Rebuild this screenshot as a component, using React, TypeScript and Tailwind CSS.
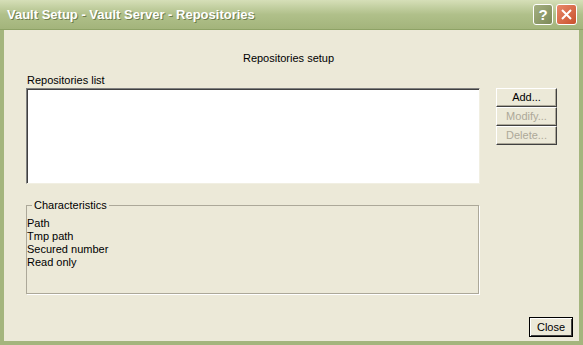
// Bouton classique XP (thème olive), relief 3D par bordures
function XpButton({
  label,
  disabled = false,
  className = "",
}: {
  label: string;
  disabled?: boolean;
  className?: string;
}) {
  return (
    <button
      disabled={disabled}
      className={
        "h-[19px] border border-t-white border-l-white border-r-[#404040] border-b-[#404040] bg-[#ece9d8] shadow-[inset_-1px_-1px_0_#aca899] text-[11px] leading-none " +
        (disabled ? "text-[#aca899] " : "text-black ") +
        className
      }
    >
      {label}
    </button>
  );
}

export default function App() {
  return (
    <div
      className="w-[583px] h-[345px] flex flex-col bg-[#ece9d8] overflow-hidden"
      style={{ fontFamily: '"Liberation Sans", Arial, sans-serif' }}
    >
      {/* Barre de titre */}
      <div className="h-[30px] shrink-0 flex items-center pl-[7px] pr-[6px] bg-gradient-to-b from-[#d6dfb8] via-[#b0c08a] to-[#a3b47b] border-b border-[#8ea266]">
        <span className="text-white font-bold text-[13px] [text-shadow:1px_1px_0_#6e7d4c]">
          Vault Setup - Vault Server - Repositories
        </span>
        <div className="ml-auto flex gap-[3px]">
          <div className="w-[20px] h-[21px] rounded-[3px] border border-white bg-gradient-to-br from-[#a5b082] to-[#7d8a58] flex items-center justify-center text-white font-bold text-[15px] leading-none">
            ?
          </div>
          <div className="w-[21px] h-[21px] rounded-[3px] border border-white bg-gradient-to-br from-[#e8886a] to-[#c9512b] flex items-center justify-center">
            <svg width="11" height="11" viewBox="0 0 11 11">
              <path d="M1 1 L10 10 M10 1 L1 10" stroke="white" strokeWidth="2" />
            </svg>
          </div>
        </div>
      </div>

      {/* Corps */}
      <div className="flex-1 flex border-l-4 border-r-4 border-b-4 border-[#a4b57d] text-[11px] text-black">
        <div className="flex-1 flex flex-col pl-[22px] pr-[6px]">
          <div className="text-center pt-[20px] pr-[22px] h-[40px]">Repositories setup</div>
          <div className="leading-[13px] h-[13px] mt-[4px] pl-[1px]">Repositories list</div>
          <div className="flex mt-[1px]">
            <div className="w-[454px] h-[96px] bg-white border border-t-[#808080] border-l-[#808080] border-r-[#f1efe2] border-b-[#f1efe2] shadow-[inset_1px_1px_0_#404040]" />
            <div className="ml-[16px] flex flex-col w-[61px]">
              <XpButton label="Add..." />
              <XpButton label="Modify..." disabled />
              <XpButton label="Delete..." disabled />
            </div>
          </div>

          {/* Groupe Caractéristiques */}
          <fieldset className="mt-[15px] w-[453px] h-[95px] border border-[#aca899] shadow-[1px_1px_0_white] p-0 m-0">
            <legend className="ml-[5px] px-[2px] leading-[13px]">Characteristics</legend>
            <div className="leading-[13px] mt-[5px]">
              <div>Path</div>
              <div>Tmp path</div>
              <div>Secured number</div>
              <div>Read only</div>
            </div>
          </fieldset>

          <div className="flex-1 flex items-end justify-end pb-[4px]">
            <button className="w-[44px] h-[20px] border border-black bg-[#ece9d8] shadow-[inset_1px_1px_0_white,inset_-1px_-1px_0_#404040] text-[11px] leading-none">
              Close
            </button>
          </div>
        </div>
      </div>
    </div>
  );
}
